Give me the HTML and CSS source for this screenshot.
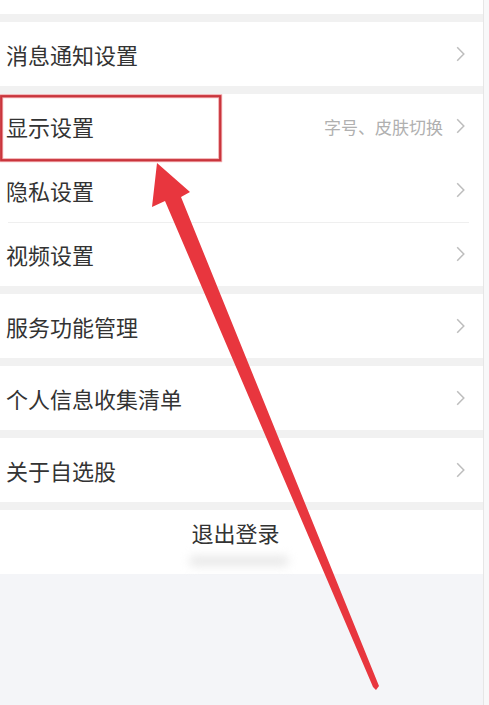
FILE: index.html
```html
<!DOCTYPE html>
<html lang="zh-CN">
<head>
  <meta charset="UTF-8">
  <title>设置</title>
  <link rel="stylesheet" href="styles.css">
</head>
<body>

  <div class="page">
    <div class="list">
      <!-- 上一组的底部 -->
      <div class="stub"></div>

      <div class="group">
        <a class="row" href="#">
          <span class="label">消息通知设置</span>
          <svg class="chev" width="9" height="16" viewBox="0 0 9 16"><path d="M1.2 1.2L7.8 8L1.2 14.8"/></svg>
        </a>
      </div>

      <div class="group">
        <a class="row" href="#">
          <span class="label">显示设置</span>
          <span class="hint">字号、皮肤切换</span>
          <svg class="chev" width="9" height="16" viewBox="0 0 9 16"><path d="M1.2 1.2L7.8 8L1.2 14.8"/></svg>
        </a>
        <a class="row no-line" href="#">
          <span class="label">隐私设置</span>
          <svg class="chev" width="9" height="16" viewBox="0 0 9 16"><path d="M1.2 1.2L7.8 8L1.2 14.8"/></svg>
        </a>
        <a class="row" href="#">
          <span class="label">视频设置</span>
          <svg class="chev" width="9" height="16" viewBox="0 0 9 16"><path d="M1.2 1.2L7.8 8L1.2 14.8"/></svg>
        </a>
      </div>

      <div class="group">
        <a class="row" href="#">
          <span class="label">服务功能管理</span>
          <svg class="chev" width="9" height="16" viewBox="0 0 9 16"><path d="M1.2 1.2L7.8 8L1.2 14.8"/></svg>
        </a>
      </div>

      <div class="group">
        <a class="row" href="#">
          <span class="label">个人信息收集清单</span>
          <svg class="chev" width="9" height="16" viewBox="0 0 9 16"><path d="M1.2 1.2L7.8 8L1.2 14.8"/></svg>
        </a>
      </div>

      <div class="group">
        <a class="row" href="#">
          <span class="label">关于自选股</span>
          <svg class="chev" width="9" height="16" viewBox="0 0 9 16"><path d="M1.2 1.2L7.8 8L1.2 14.8"/></svg>
        </a>
      </div>

      <!-- 退出登录 -->
      <div class="logout">
        <span class="logout-text">退出登录</span>
        <span class="smudge"></span>
      </div>
    </div>
  </div>

  <!-- 标注：红框和箭头 -->
  <svg class="mark" width="489" height="705" viewBox="0 0 489 705">
    <rect x="1.2" y="96.2" width="219" height="64" fill="none" stroke="#f1a9ac" stroke-width="4"/>
    <rect x="1.2" y="96.2" width="219" height="64" fill="none" stroke="#c9353c" stroke-width="2.2"/>
    <polygon fill="#e8363e"
      points="157,163 190,192 181,197 379,686 376,690 373,687 165,201 152,207"/>
  </svg>

</body>
</html>
```

FILE: styles.css
```css
body {
  margin: 0;
  background-color: #f8f8f9;
  font-family: "Noto Sans CJK SC", "Noto Sans", sans-serif;
  color: #333;
}

/* 整个设置页 */
.page {
  width: 483px;
  height: 705px;
  border-right: 1px solid #e6e6e6;
  background-color: #f4f5f8;
}

.list {
  display: flex;
  flex-direction: column;
  gap: 8px;
  background-color: #f1f1f1;
}

.stub {
  height: 14px;
  background-color: #fff;
}

.group {
  background-color: #fff;
  display: flex;
  flex-direction: column;
}

.row {
  display: flex;
  align-items: center;
  height: 64px;
  padding: 0 18px 0 6px;
  text-decoration: none;
  color: #333;
  position: relative;
}

/* 同组内的分隔线 */
.row + .row::before {
  content: "";
  position: absolute;
  top: 0;
  left: 8px;
  right: 14px;
  height: 1px;
  background-color: #efefef;
}

.row.no-line::before {
  display: none;
}

.label {
  font-size: 22px;
  flex: 1;
}

.hint {
  font-size: 17px;
  color: #b0b0b0;
  margin-right: 13px;
}

.chev path {
  fill: none;
  stroke: #bdbdbd;
  stroke-width: 1.5;
}

.logout {
  height: 64px;
  background-color: #fff;
  display: flex;
  flex-direction: column;
  align-items: center;
  padding-top: 6px;
  box-sizing: border-box;
}

.logout-text {
  font-size: 22px;
  line-height: 32px;
  margin-left: -12px;
}

.smudge {
  width: 100px;
  height: 10px;
  margin-top: 8px;
  margin-left: -6px;
  border-radius: 6px;
  background-color: #e8e8e8;
  filter: blur(5px);
}

/* 标注层 */
.mark {
  position: absolute;
  top: 0;
  left: 0;
  pointer-events: none;
}
```
